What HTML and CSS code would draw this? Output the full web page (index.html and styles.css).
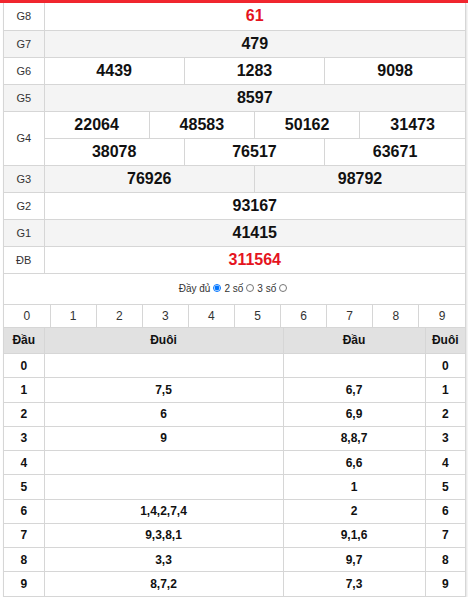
FILE: index.html
```html
<!DOCTYPE html>
<html lang="vi">
<head>
<meta charset="utf-8">
<title>KQ</title>
<link rel="stylesheet" href="styles.css">
</head>
<body>
<div class="topbar"></div>
<div class="box">
  <table class="kq">
    <colgroup><col class="c-label"><col span="12"></colgroup>
    <tr><td class="lbl">G8</td><td colspan="12" class="num red">61</td></tr>
    <tr class="alt"><td class="lbl">G7</td><td colspan="12" class="num">479</td></tr>
    <tr><td class="lbl">G6</td><td colspan="4" class="num">4439</td><td colspan="4" class="num">1283</td><td colspan="4" class="num">9098</td></tr>
    <tr class="alt"><td class="lbl">G5</td><td colspan="12" class="num">8597</td></tr>
    <tr><td class="lbl" rowspan="2">G4</td><td colspan="3" class="num">22064</td><td colspan="3" class="num">48583</td><td colspan="3" class="num">50162</td><td colspan="3" class="num">31473</td></tr>
    <tr><td colspan="4" class="num">38078</td><td colspan="4" class="num">76517</td><td colspan="4" class="num">63671</td></tr>
    <tr class="alt"><td class="lbl">G3</td><td colspan="6" class="num">76926</td><td colspan="6" class="num">98792</td></tr>
    <tr><td class="lbl">G2</td><td colspan="12" class="num">93167</td></tr>
    <tr class="alt"><td class="lbl">G1</td><td colspan="12" class="num">41415</td></tr>
    <tr><td class="lbl">ĐB</td><td colspan="12" class="num red">311564</td></tr>
  </table>

  <div class="opts">
    <label class="opt">Đầy đủ<input type="radio" name="mode" checked></label>
    <label class="opt">2 số<input type="radio" name="mode"></label>
    <label class="opt">3 số<input type="radio" name="mode"></label>
  </div>

  <table class="digits">
    <tr><td>0</td><td>1</td><td>2</td><td>3</td><td>4</td><td>5</td><td>6</td><td>7</td><td>8</td><td>9</td></tr>
  </table>

  <table class="loto">
    <colgroup><col class="c-d"><col class="c-tail"><col class="c-head"><col class="c-d"></colgroup>
    <thead>
      <tr><th>Đầu</th><th>Đuôi</th><th>Đầu</th><th>Đuôi</th></tr>
    </thead>
    <tbody>
      <tr><td>0</td><td></td><td></td><td>0</td></tr>
      <tr><td>1</td><td>7,5</td><td>6,7</td><td>1</td></tr>
      <tr><td>2</td><td>6</td><td>6,9</td><td>2</td></tr>
      <tr><td>3</td><td>9</td><td>8,8,7</td><td>3</td></tr>
      <tr><td>4</td><td></td><td>6,6</td><td>4</td></tr>
      <tr><td>5</td><td></td><td>1</td><td>5</td></tr>
      <tr><td>6</td><td>1,4,2,7,4</td><td>2</td><td>6</td></tr>
      <tr><td>7</td><td>9,3,8,1</td><td>9,1,6</td><td>7</td></tr>
      <tr><td>8</td><td>3,3</td><td>9,7</td><td>8</td></tr>
      <tr><td>9</td><td>8,7,2</td><td>7,3</td><td>9</td></tr>
    </tbody>
  </table>
</div>
</body>
</html>
```

FILE: styles.css
```css
* { box-sizing: border-box; }
html, body { margin: 0; padding: 0; background: #fff; }
body {
  font-family: "Liberation Sans", Arial, sans-serif;
  color: #333;
}
.topbar { height: 3px; background: #f1262e; }
.box {
  margin: 0 2px 0 3px;
  border-left: 1px solid #d6d6d6;
  border-right: 1px solid #d6d6d6;
  box-shadow: 1px 1px 2px rgba(0,0,0,0.12);
}
table {
  width: 100%;
  border-collapse: collapse;
  table-layout: fixed;
  border-left: hidden;
  border-right: hidden;
}
td, th {
  border: 1px solid #d6d6d6;
  padding: 0;
  text-align: center;
}

/* results table */
.kq { border-top: hidden; }
.kq .c-label { width: 40px; }
.kq td { height: 27px; line-height: 26px; }
.kq .alt td { background: #f4f4f4; }
.kq td[rowspan] { background: #fff; }
.lbl { font-size: 11px; color: #333; }
.num { font-size: 16px; font-weight: bold; color: #111; }
.num.red { color: #e5141e; }

/* options */
.opts {
  height: 30px;
  display: flex;
  justify-content: center;
  align-items: center;
  font-size: 10px;
  color: #333;
  padding-bottom: 1px;
}
.opt { display: inline-flex; align-items: center; }
.opt input {
  width: 8px;
  height: 8px;
  margin: 0 3px 0 3px;
}

/* digit tabs */
.digits td { height: 23px; font-size: 12px; color: #333; }

/* loto table */
.loto { border-top: hidden; }
.loto .c-d { width: 40px; }
.loto .c-head { width: 142px; }
.loto th {
  height: 26px;
  background: #e1e1e1;
  font-size: 12px;
  font-weight: bold;
  color: #111;
}
.loto td {
  height: 24.26px;
  font-size: 12px;
  font-weight: bold;
  color: #111;
}
```
